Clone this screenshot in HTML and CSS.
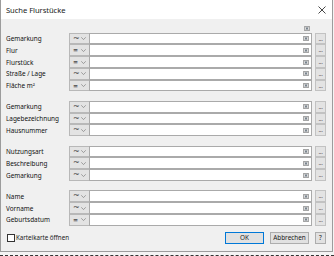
FILE: index.html
```html
<!DOCTYPE html>
<html lang="de">
<head>
<meta charset="utf-8">
<title>Suche Flurstücke</title>
<link rel="stylesheet" href="styles.css">
</head>
<body>
<div class="window">
  <div class="titlebar">
    <span class="title">Suche Flurstücke</span>
    <svg class="close" width="8" height="8" viewBox="0 0 8 8"><path d="M0.5 0.5L7.5 7.5M7.5 0.5L0.5 7.5" stroke="#333" stroke-width="0.9" fill="none"/></svg>
  </div>
  <div class="content">
    <div class="toprow">
      <svg class="clr" width="6" height="5" viewBox="0 0 6 5"><rect x="0.5" y="0.5" width="5" height="4" fill="#dcdcdc" stroke="#a8a8a8" stroke-width="1"/><path d="M1.8 1.4L4.2 3.6M4.2 1.4L1.8 3.6" stroke="#4a5a6a" stroke-width="0.8"/></svg>
    </div>

    <div class="group">
      <div class="row"><span class="lbl">Gemarkung</span><div class="op"><span class="sym">~</span><svg class="chev" width="5" height="3" viewBox="0 0 5 3"><path d="M0.3 0.3L2.5 2.6L4.7 0.3" stroke="#8a8a8a" stroke-width="0.8" fill="none"/></svg></div><div class="inp"><svg class="clr" width="6" height="5" viewBox="0 0 6 5"><rect x="0.5" y="0.5" width="5" height="4" fill="#dcdcdc" stroke="#a8a8a8" stroke-width="1"/><path d="M1.8 1.4L4.2 3.6M4.2 1.4L1.8 3.6" stroke="#4a5a6a" stroke-width="0.8"/></svg></div><button class="dots">...</button></div>
      <div class="row"><span class="lbl">Flur</span><div class="op"><span class="sym eq">=</span><svg class="chev" width="5" height="3" viewBox="0 0 5 3"><path d="M0.3 0.3L2.5 2.6L4.7 0.3" stroke="#8a8a8a" stroke-width="0.8" fill="none"/></svg></div><div class="inp"><svg class="clr" width="6" height="5" viewBox="0 0 6 5"><rect x="0.5" y="0.5" width="5" height="4" fill="#dcdcdc" stroke="#a8a8a8" stroke-width="1"/><path d="M1.8 1.4L4.2 3.6M4.2 1.4L1.8 3.6" stroke="#4a5a6a" stroke-width="0.8"/></svg></div><button class="dots">...</button></div>
      <div class="row"><span class="lbl">Flurstück</span><div class="op"><span class="sym eq">=</span><svg class="chev" width="5" height="3" viewBox="0 0 5 3"><path d="M0.3 0.3L2.5 2.6L4.7 0.3" stroke="#8a8a8a" stroke-width="0.8" fill="none"/></svg></div><div class="inp"><svg class="clr" width="6" height="5" viewBox="0 0 6 5"><rect x="0.5" y="0.5" width="5" height="4" fill="#dcdcdc" stroke="#a8a8a8" stroke-width="1"/><path d="M1.8 1.4L4.2 3.6M4.2 1.4L1.8 3.6" stroke="#4a5a6a" stroke-width="0.8"/></svg></div><button class="dots">...</button></div>
      <div class="row"><span class="lbl">Straße / Lage</span><div class="op"><span class="sym">~</span><svg class="chev" width="5" height="3" viewBox="0 0 5 3"><path d="M0.3 0.3L2.5 2.6L4.7 0.3" stroke="#8a8a8a" stroke-width="0.8" fill="none"/></svg></div><div class="inp"><svg class="clr" width="6" height="5" viewBox="0 0 6 5"><rect x="0.5" y="0.5" width="5" height="4" fill="#dcdcdc" stroke="#a8a8a8" stroke-width="1"/><path d="M1.8 1.4L4.2 3.6M4.2 1.4L1.8 3.6" stroke="#4a5a6a" stroke-width="0.8"/></svg></div><button class="dots">...</button></div>
      <div class="row"><span class="lbl">Fläche m²</span><div class="op"><span class="sym eq">=</span><svg class="chev" width="5" height="3" viewBox="0 0 5 3"><path d="M0.3 0.3L2.5 2.6L4.7 0.3" stroke="#8a8a8a" stroke-width="0.8" fill="none"/></svg></div><div class="inp"><svg class="clr" width="6" height="5" viewBox="0 0 6 5"><rect x="0.5" y="0.5" width="5" height="4" fill="#dcdcdc" stroke="#a8a8a8" stroke-width="1"/><path d="M1.8 1.4L4.2 3.6M4.2 1.4L1.8 3.6" stroke="#4a5a6a" stroke-width="0.8"/></svg></div><button class="dots">...</button></div>
    </div>
    <div class="sep"></div>

    <div class="group">
      <div class="row"><span class="lbl">Gemarkung</span><div class="op"><span class="sym">~</span><svg class="chev" width="5" height="3" viewBox="0 0 5 3"><path d="M0.3 0.3L2.5 2.6L4.7 0.3" stroke="#8a8a8a" stroke-width="0.8" fill="none"/></svg></div><div class="inp"><svg class="clr" width="6" height="5" viewBox="0 0 6 5"><rect x="0.5" y="0.5" width="5" height="4" fill="#dcdcdc" stroke="#a8a8a8" stroke-width="1"/><path d="M1.8 1.4L4.2 3.6M4.2 1.4L1.8 3.6" stroke="#4a5a6a" stroke-width="0.8"/></svg></div><button class="dots">...</button></div>
      <div class="row"><span class="lbl">Lagebezeichnung</span><div class="op"><span class="sym">~</span><svg class="chev" width="5" height="3" viewBox="0 0 5 3"><path d="M0.3 0.3L2.5 2.6L4.7 0.3" stroke="#8a8a8a" stroke-width="0.8" fill="none"/></svg></div><div class="inp"><svg class="clr" width="6" height="5" viewBox="0 0 6 5"><rect x="0.5" y="0.5" width="5" height="4" fill="#dcdcdc" stroke="#a8a8a8" stroke-width="1"/><path d="M1.8 1.4L4.2 3.6M4.2 1.4L1.8 3.6" stroke="#4a5a6a" stroke-width="0.8"/></svg></div><button class="dots">...</button></div>
      <div class="row"><span class="lbl">Hausnummer</span><div class="op"><span class="sym">~</span><svg class="chev" width="5" height="3" viewBox="0 0 5 3"><path d="M0.3 0.3L2.5 2.6L4.7 0.3" stroke="#8a8a8a" stroke-width="0.8" fill="none"/></svg></div><div class="inp"><svg class="clr" width="6" height="5" viewBox="0 0 6 5"><rect x="0.5" y="0.5" width="5" height="4" fill="#dcdcdc" stroke="#a8a8a8" stroke-width="1"/><path d="M1.8 1.4L4.2 3.6M4.2 1.4L1.8 3.6" stroke="#4a5a6a" stroke-width="0.8"/></svg></div><button class="dots">...</button></div>
    </div>
    <div class="sep"></div>

    <div class="group">
      <div class="row"><span class="lbl">Nutzungsart</span><div class="op"><span class="sym">~</span><svg class="chev" width="5" height="3" viewBox="0 0 5 3"><path d="M0.3 0.3L2.5 2.6L4.7 0.3" stroke="#8a8a8a" stroke-width="0.8" fill="none"/></svg></div><div class="inp"><svg class="clr" width="6" height="5" viewBox="0 0 6 5"><rect x="0.5" y="0.5" width="5" height="4" fill="#dcdcdc" stroke="#a8a8a8" stroke-width="1"/><path d="M1.8 1.4L4.2 3.6M4.2 1.4L1.8 3.6" stroke="#4a5a6a" stroke-width="0.8"/></svg></div><button class="dots">...</button></div>
      <div class="row"><span class="lbl">Beschreibung</span><div class="op"><span class="sym">~</span><svg class="chev" width="5" height="3" viewBox="0 0 5 3"><path d="M0.3 0.3L2.5 2.6L4.7 0.3" stroke="#8a8a8a" stroke-width="0.8" fill="none"/></svg></div><div class="inp"><svg class="clr" width="6" height="5" viewBox="0 0 6 5"><rect x="0.5" y="0.5" width="5" height="4" fill="#dcdcdc" stroke="#a8a8a8" stroke-width="1"/><path d="M1.8 1.4L4.2 3.6M4.2 1.4L1.8 3.6" stroke="#4a5a6a" stroke-width="0.8"/></svg></div><button class="dots">...</button></div>
      <div class="row"><span class="lbl">Gemarkung</span><div class="op"><span class="sym">~</span><svg class="chev" width="5" height="3" viewBox="0 0 5 3"><path d="M0.3 0.3L2.5 2.6L4.7 0.3" stroke="#8a8a8a" stroke-width="0.8" fill="none"/></svg></div><div class="inp"><svg class="clr" width="6" height="5" viewBox="0 0 6 5"><rect x="0.5" y="0.5" width="5" height="4" fill="#dcdcdc" stroke="#a8a8a8" stroke-width="1"/><path d="M1.8 1.4L4.2 3.6M4.2 1.4L1.8 3.6" stroke="#4a5a6a" stroke-width="0.8"/></svg></div><button class="dots">...</button></div>
    </div>
    <div class="sep"></div>

    <div class="group">
      <div class="row"><span class="lbl">Name</span><div class="op"><span class="sym">~</span><svg class="chev" width="5" height="3" viewBox="0 0 5 3"><path d="M0.3 0.3L2.5 2.6L4.7 0.3" stroke="#8a8a8a" stroke-width="0.8" fill="none"/></svg></div><div class="inp"><svg class="clr" width="6" height="5" viewBox="0 0 6 5"><rect x="0.5" y="0.5" width="5" height="4" fill="#dcdcdc" stroke="#a8a8a8" stroke-width="1"/><path d="M1.8 1.4L4.2 3.6M4.2 1.4L1.8 3.6" stroke="#4a5a6a" stroke-width="0.8"/></svg></div><button class="dots">...</button></div>
      <div class="row"><span class="lbl">Vorname</span><div class="op"><span class="sym">~</span><svg class="chev" width="5" height="3" viewBox="0 0 5 3"><path d="M0.3 0.3L2.5 2.6L4.7 0.3" stroke="#8a8a8a" stroke-width="0.8" fill="none"/></svg></div><div class="inp"><svg class="clr" width="6" height="5" viewBox="0 0 6 5"><rect x="0.5" y="0.5" width="5" height="4" fill="#dcdcdc" stroke="#a8a8a8" stroke-width="1"/><path d="M1.8 1.4L4.2 3.6M4.2 1.4L1.8 3.6" stroke="#4a5a6a" stroke-width="0.8"/></svg></div><button class="dots">...</button></div>
      <div class="row"><span class="lbl">Geburtsdatum</span><div class="op"><span class="sym eq">=</span><svg class="chev" width="5" height="3" viewBox="0 0 5 3"><path d="M0.3 0.3L2.5 2.6L4.7 0.3" stroke="#8a8a8a" stroke-width="0.8" fill="none"/></svg></div><div class="inp"><svg class="clr" width="6" height="5" viewBox="0 0 6 5"><rect x="0.5" y="0.5" width="5" height="4" fill="#dcdcdc" stroke="#a8a8a8" stroke-width="1"/><path d="M1.8 1.4L4.2 3.6M4.2 1.4L1.8 3.6" stroke="#4a5a6a" stroke-width="0.8"/></svg></div><button class="dots">...</button></div>
    </div>

    <div class="footer">
      <label class="check"><span class="box"></span><span>Karteikarte öffnen</span></label>
      <div class="buttons">
        <button class="btn ok">OK</button>
        <button class="btn">Abbrechen</button>
        <button class="btn help">?</button>
      </div>
    </div>
  </div>
</div>
<div class="under"></div>
</body>
</html>
```

FILE: styles.css
```css
* { box-sizing: border-box; }
html, body { margin: 0; padding: 0; }
body {
  width: 334px;
  height: 256px;
  overflow: hidden;
  background: #f4f4f4;
  font-family: "Noto Sans", "Open Sans", sans-serif;
  color: #1a1a1a;
}
.window {
  width: 333px;
  height: 252px;
  border: 1px solid #9c9c9c;
  border-top: none;
  background: #f0f0f0;
  display: flex;
  flex-direction: column;
}
.titlebar {
  height: 19px;
  background: #ffffff;
  display: flex;
  align-items: center;
  justify-content: space-between;
  padding: 0 6px 0 5px;
}
.title {
  font-size: 7.6px;
  color: #1a1a1a;
  letter-spacing: -0.05px;
}
.close { display: block; }
.content {
  flex: 1;
  padding: 6px 6px 0 4px;
  display: flex;
  flex-direction: column;
}
.toprow {
  height: 7.7px;
  display: flex;
  justify-content: flex-end;
  align-items: flex-start;
  padding-right: 16px;
  padding-top: 1px;
}
.clr { display: block; }
.group { display: flex; flex-direction: column; }
.row {
  height: 11.75px;
  display: flex;
  align-items: stretch;
}
.lbl {
  width: 64px;
  font-size: 6.4px;
  display: flex;
  align-items: center;
  padding-left: 1px;
  white-space: nowrap;
  color: #111;
}
.op {
  width: 20px;
  background: #e3e3e3;
  border: 1px solid #b8b8b8;
  border-right: none;
  display: flex;
  align-items: center;
  padding-left: 3px;
  gap: 3px;
}
.sym {
  font-size: 8px;
  width: 5px;
  color: #444;
  line-height: 1;
  font-family: "DejaVu Sans", sans-serif;
}
.sym.eq { font-size: 6px; font-weight: bold; }
.chev { display: block; }
.inp {
  flex: 1;
  background: #ffffff;
  border: 1px solid #aaaaaa;
  display: flex;
  align-items: center;
  justify-content: flex-end;
  padding-right: 2px;
}
.dots {
  width: 11px;
  margin: 0 0 0 2.6px;
  padding: 0;
  background: #e3e3e3;
  border: 1px solid #c2c2c2;
  font-size: 6px;
  font-family: "Noto Sans", sans-serif;
  color: #333;
  line-height: 1;
  display: flex;
  align-items: center;
  justify-content: center;
  letter-spacing: -0.3px;
}
.sep {
  height: 9.5px;
}
.footer {
  flex: 1;
  display: flex;
  align-items: center;
  justify-content: space-between;
  padding-bottom: 1px;
}
.check {
  display: flex;
  align-items: center;
  gap: 1px;
  font-size: 6.2px;
  padding-left: 2px;
}
.box {
  width: 8px;
  height: 8px;
  border: 1px solid #333;
  background: #fff;
}
.buttons {
  display: flex;
  gap: 6px;
}
.btn {
  height: 12px;
  width: 39px;
  padding: 0;
  background: #e1e1e1;
  border: 1px solid #adadad;
  font-family: "Noto Sans", sans-serif;
  font-size: 6.4px;
  color: #1a1a1a;
  line-height: 1;
}
.btn.ok { border-color: #0078d7; }
.btn.help { width: 11px; }
.under {
  height: 4px;
  border-bottom: 1px dashed #333;
}
```
